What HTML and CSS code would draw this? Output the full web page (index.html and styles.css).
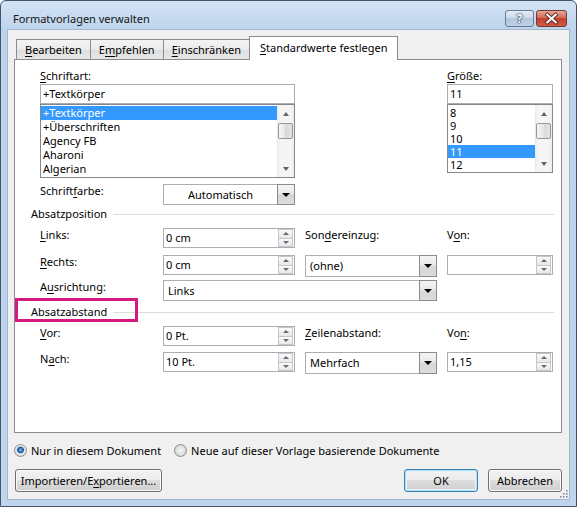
FILE: index.html
```html
<!DOCTYPE html>
<html lang="de">
<head>
    <meta charset="utf-8">
    <title>Formatvorlagen verwalten</title>
    <link rel="stylesheet" href="styles.css">
</head>
<body>

<div class="window">
    <div class="titlebar">
        <span class="title">Formatvorlagen verwalten</span>
        <div class="caption">
            <span class="cap-btn help">?</span>
            <span class="cap-btn close">
                <svg width="31" height="17" viewBox="0 0 31 17">
                    <path d="M11 4.5 L20 12.5 M20 4.5 L11 12.5" stroke="#5a2a22" stroke-width="4" stroke-linecap="square"/>
                    <path d="M11 4.5 L20 12.5 M20 4.5 L11 12.5" stroke="#fff" stroke-width="2.2" stroke-linecap="square"/>
                </svg>
            </span>
        </div>
    </div>

    <div class="client">
        <div class="tabs">
            <div class="tab"><u>B</u>earbeiten</div>
            <div class="tab">E<u>m</u>pfehlen</div>
            <div class="tab"><u>E</u>inschränken</div>
            <div class="tab active"><u>S</u>tandardwerte festlegen</div>
        </div>

        <div class="panel">
            <!-- Schriftart / Größe -->
            <div class="grid fonts">
                <div class="font-pick">
                    <span class="caption-label"><u>S</u>chriftart:</span>
                    <div class="textbox">+Textkörper</div>
                    <div class="listbox font-list">
                        <ul>
                            <li class="selected">+Textkörper</li>
                            <li>+Überschriften</li>
                            <li>Agency FB</li>
                            <li>Aharoni</li>
                            <li>Algerian</li>
                        </ul>
                        <div class="vscroll">
                            <span class="sb-arrow up"></span>
                            <span class="sb-thumb"></span>
                            <span class="sb-track"></span>
                            <span class="sb-arrow down"></span>
                        </div>
                    </div>
                </div>
                <div class="size-pick">
                    <span class="caption-label"><u>G</u>röße:</span>
                    <div class="textbox">11</div>
                    <div class="listbox size-list">
                        <ul>
                            <li>8</li>
                            <li>9</li>
                            <li>10</li>
                            <li class="selected">11</li>
                            <li>12</li>
                        </ul>
                        <div class="vscroll">
                            <span class="sb-arrow up"></span>
                            <span class="sb-thumb"></span>
                            <span class="sb-track"></span>
                            <span class="sb-arrow down"></span>
                        </div>
                    </div>
                </div>
            </div>

            <div class="grid row row-color">
                <span class="lbl">Schrift<u>f</u>arbe:</span>
                <div class="combo centered"><span class="val">Automatisch</span><span class="drop"></span></div>
            </div>

            <div class="group group-pos">Absatzposition</div>

            <div class="grid row row-links">
                <span class="lbl"><u>L</u>inks:</span>
                <div class="spin"><span class="val">0 cm</span><span class="updown"><i class="up"></i><i class="down"></i></span></div>
                <span class="lbl">Son<u>d</u>ereinzug:</span>
                <span class="lbl">V<u>o</u>n:</span>
            </div>

            <div class="grid row row-rechts">
                <span class="lbl"><u>R</u>echts:</span>
                <div class="spin"><span class="val">0 cm</span><span class="updown"><i class="up"></i><i class="down"></i></span></div>
                <div class="combo tall"><span class="val">(ohne)</span><span class="drop"></span></div>
                <div class="spin"><span class="val"></span><span class="updown"><i class="up"></i><i class="down"></i></span></div>
            </div>

            <div class="grid row row-align">
                <span class="lbl">A<u>u</u>srichtung:</span>
                <div class="combo span-2"><span class="val">Links</span><span class="drop"></span></div>
            </div>

            <div class="group group-space">Absatzabstand</div>

            <div class="grid row row-vor">
                <span class="lbl"><u>V</u>or:</span>
                <div class="spin"><span class="val">0 Pt.</span><span class="updown"><i class="up"></i><i class="down"></i></span></div>
                <span class="lbl"><u>Z</u>eilenabstand:</span>
                <span class="lbl">Vo<u>n</u>:</span>
            </div>

            <div class="grid row row-nach">
                <span class="lbl">N<u>a</u>ch:</span>
                <div class="spin"><span class="val">10 Pt.</span><span class="updown"><i class="up"></i><i class="down"></i></span></div>
                <div class="combo tall"><span class="val">Mehrfach</span><span class="drop"></span></div>
                <div class="spin"><span class="val">1,15</span><span class="updown"><i class="up"></i><i class="down"></i></span></div>
            </div>

            <!-- Markierung um die Überschrift -->
            <div class="mark"></div>
        </div>

        <div class="scope">
            <label class="option"><span class="radio checked"></span>Nur in diesem Dokument</label>
            <label class="option"><span class="radio"></span>Neue auf dieser Vorlage basierende Dokumente</label>
        </div>

        <div class="actions">
            <button class="btn wide">Importieren/E<u>x</u>portieren...</button>
            <button class="btn std default">OK</button>
            <button class="btn std">Abbrechen</button>
        </div>

        <svg class="grip" width="12" height="12" viewBox="0 0 12 12">
            <g fill="#b8c4d2">
                <rect x="9" y="3" width="2" height="2"/>
                <rect x="6" y="6" width="2" height="2"/>
                <rect x="9" y="6" width="2" height="2"/>
                <rect x="3" y="9" width="2" height="2"/>
                <rect x="6" y="9" width="2" height="2"/>
                <rect x="9" y="9" width="2" height="2"/>
            </g>
            <g fill="#6f7c8c">
                <rect x="9" y="3" width="1" height="1"/>
                <rect x="6" y="6" width="1" height="1"/>
                <rect x="9" y="6" width="1" height="1"/>
                <rect x="3" y="9" width="1" height="1"/>
                <rect x="6" y="9" width="1" height="1"/>
                <rect x="9" y="9" width="1" height="1"/>
            </g>
        </svg>
    </div>
</div>

</body>
</html>
```

FILE: styles.css
```css
/* Dialog im Stil von Windows 7 */
* {
    box-sizing: border-box;
}

body {
    margin: 0;
    background: #fff;
    font-family: "Noto Sans", "Open Sans", sans-serif;
    font-size: 11px;
    color: #000;
}

u {
    text-decoration-thickness: 1px;
    text-underline-offset: 2px;
}

.window {
    width: 577px;
    height: 507px;
    display: flex;
    flex-direction: column;
    padding: 0 6px 6px;
    border: 1px solid #43536a;
    border-radius: 6px 6px 0 0;
    background: linear-gradient(#d3e3f4, #bcd3ec 30px, #bfd5ed);
}

/* Titelleiste */
.titlebar {
    height: 28px;
    display: flex;
    align-items: center;
    padding: 7px 3px 0 6px;
}

.title {
    flex: 1;
    color: #141414;
}

.caption {
    display: flex;
    gap: 2px;
}

.cap-btn {
    height: 17px;
    border: 1px solid #6a7b92;
    border-radius: 3px;
    display: flex;
    align-items: center;
    justify-content: center;
}

.help {
    width: 29px;
    background: linear-gradient(#e4ecf6, #c9d8ea 50%, #b2c6de 50%, #bfd1e6);
    color: #fff;
    font-weight: bold;
    font-size: 12px;
    text-shadow: 0 0 1px #2a3d57, 0 0 1px #2a3d57, 0 0 2px #2a3d57;
}

.close {
    width: 31px;
    border-color: #6e3b32;
    background: linear-gradient(#e8a597, #d46a57 45%, #c2412f 50%, #cf5a43);
}

/* Clientbereich */
.client {
    flex: 1;
    position: relative;
    display: flex;
    flex-direction: column;
    padding: 0 7px 0 6px;
    border: 1px solid #a3b7cf;
    background: #f0f0f0;
}

.tabs {
    display: flex;
    align-items: flex-end;
    height: 29px;
    padding-left: 2px;
}

.tab {
    height: 20px;
    padding: 2px 8px 0;
    margin-right: -1px;
    border: 1px solid #898c95;
    border-bottom: none;
    background: linear-gradient(#f3f3f3, #ebebeb 50%, #dedede 50%, #e6e6e6);
    line-height: 16px;
}

.tab.active {
    position: relative;
    z-index: 1;
    height: 24px;
    margin-bottom: -1px;
    padding: 3px 10px 0;
    background: #fff;
}

.panel {
    position: relative;
    height: 374px;
    padding: 7px 7px 0 25px;
    border: 1px solid #898c95;
    background: #fff;
}

.grid {
    display: grid;
    grid-template-columns: 113px 132px 132px 106px;
    column-gap: 10px;
    align-items: start;
}

.font-pick {
    grid-column: 1 / 3;
}

.size-pick {
    grid-column: 4;
}

.caption-label {
    display: block;
    line-height: 17px;
}

.textbox {
    height: 20px;
    padding-left: 2px;
    border: 1px solid #abadb3;
    background: #fff;
    line-height: 18px;
}

.listbox {
    display: flex;
    border: 1px solid #828790;
    background: #fff;
}

.listbox ul {
    flex: 1;
    margin: 0;
    padding: 1px 0 0;
    list-style: none;
    overflow: hidden;
}

.listbox li {
    padding-left: 2px;
}

.listbox li.selected {
    background: #3399ff;
    color: #fff;
}

.font-list {
    height: 74px;
}

.font-list li {
    height: 14px;
    line-height: 14px;
}

.size-list {
    height: 69px;
}

.size-list li {
    height: 13px;
    line-height: 13px;
}

/* Bildlaufleiste */
.vscroll {
    width: 17px;
    display: flex;
    flex-direction: column;
    background: linear-gradient(90deg, #e9e9e9, #f5f5f5 3px, #f5f5f5 14px, #ececec);
}

.sb-arrow {
    height: 17px;
    display: flex;
    align-items: center;
    justify-content: center;
}

.sb-arrow::before {
    content: "";
    border-left: 3.5px solid transparent;
    border-right: 3.5px solid transparent;
}

.sb-arrow.up::before {
    border-bottom: 4px solid #636363;
}

.sb-arrow.down::before {
    border-top: 4px solid #636363;
}

.sb-thumb {
    height: 16px;
    margin: 1px 1px 0;
    border: 1px solid #979797;
    border-radius: 2px;
    background: linear-gradient(90deg, #f6f6f6, #e5e5e5 50%, #d9d9d9 50%, #e3e3e3);
}

.sb-track {
    flex: 1;
}

/* Zeilen mit Beschriftung und Feldern */
.lbl {
    margin-top: -1px;
    line-height: 16px;
    white-space: nowrap;
}

.row-color {
    margin-top: 6px;
}

.row-links {
    margin-top: 6px;
}

.row-rechts {
    margin-top: 7px;
}

.row-align {
    margin-top: 3px;
}

.row-vor {
    margin-top: 6px;
}

.row-nach {
    margin-top: 6px;
}

.group {
    display: flex;
    align-items: center;
    gap: 6px;
    margin-left: -9px;
    line-height: 16px;
}

.group::after {
    content: "";
    flex: 1;
    height: 1px;
    background: #dcdcdc;
}

.group-pos {
    margin-top: 1px;
}

.group-space {
    margin-top: 3px;
}

.combo {
    display: flex;
    height: 21px;
    border: 1px solid #abadb3;
    background: #fff;
}

.combo.tall {
    height: 22px;
}

.combo.span-2 {
    grid-column: 2 / 4;
}

.combo .val {
    flex: 1;
    padding-left: 4px;
    line-height: 19px;
}

.combo.centered .val {
    text-align: center;
    padding-left: 0;
}

.combo .drop {
    width: 18px;
    margin: -1px -1px -1px 0;
    display: flex;
    align-items: center;
    justify-content: center;
    border: 1px solid #8b8b8b;
    background: linear-gradient(#f5f5f5, #e6e6e6 50%, #d6d6d6 50%, #dcdcdc);
}

.combo .drop::before {
    content: "";
    border-left: 4px solid transparent;
    border-right: 4px solid transparent;
    border-top: 4px solid #000;
}

.spin {
    display: flex;
    height: 20px;
    border: 1px solid #abadb3;
    background: #fff;
}

.spin .val {
    flex: 1;
    padding-left: 2px;
    line-height: 18px;
}

.spin .updown {
    width: 15px;
    margin: 0 1px 0 0;
    display: flex;
    flex-direction: column;
}

.updown i {
    flex: 1;
    display: flex;
    align-items: center;
    justify-content: center;
    border: 1px solid #c6c6c6;
    background: linear-gradient(#fafafa, #e8e8e8);
}

.updown i + i {
    border-top: none;
}

.updown i::before {
    content: "";
    border-left: 3px solid transparent;
    border-right: 3px solid transparent;
}

.updown .up::before {
    border-bottom: 3px solid #5f6b7a;
}

.updown .down::before {
    border-top: 3px solid #5f6b7a;
}

.mark {
    position: absolute;
    left: 0;
    top: 238px;
    width: 123px;
    height: 24px;
    border: 3px solid #d6197e;
}

/* Gültigkeitsbereich */
.scope {
    display: flex;
    align-items: center;
    height: 16px;
    margin-top: 9px;
}

.option {
    display: flex;
    align-items: center;
    gap: 4px;
}

.option + .option {
    margin-left: 13px;
}

.radio {
    width: 13px;
    height: 13px;
    border: 1px solid #8e8f8f;
    border-radius: 50%;
    background: radial-gradient(circle, #f4f4f4 0, #e2e2e2 4px, #cdcdcd 6px);
}

.radio.checked {
    background: radial-gradient(circle at 50% 45%, #8fc3f0 0, #2a6fb8 2px, #1b4f86 3px, #c9dcee 3.6px, #eeeeee 4.5px, #d0d0d0 6px);
}

/* Schaltflächen */
.actions {
    display: flex;
    gap: 10px;
    margin-top: 11px;
    padding-left: 1px;
}

.btn {
    height: 23px;
    padding: 0;
    border: 1px solid #707070;
    border-radius: 3px;
    background: linear-gradient(#f2f2f2, #ebebeb 50%, #dddddd 50%, #cfcfcf);
    box-shadow: inset 0 0 0 1px #fbfbfb;
    font: inherit;
    color: #000;
}

.btn.wide {
    width: 147px;
    margin-right: auto;
}

.btn.std {
    width: 74px;
}

.btn.default {
    border-color: #3c7fb1;
    box-shadow: inset 0 0 0 1px #aee0f8, inset 0 0 0 2px #e6f4fb;
}

.grip {
    position: absolute;
    right: 0;
    bottom: 0;
}
```
